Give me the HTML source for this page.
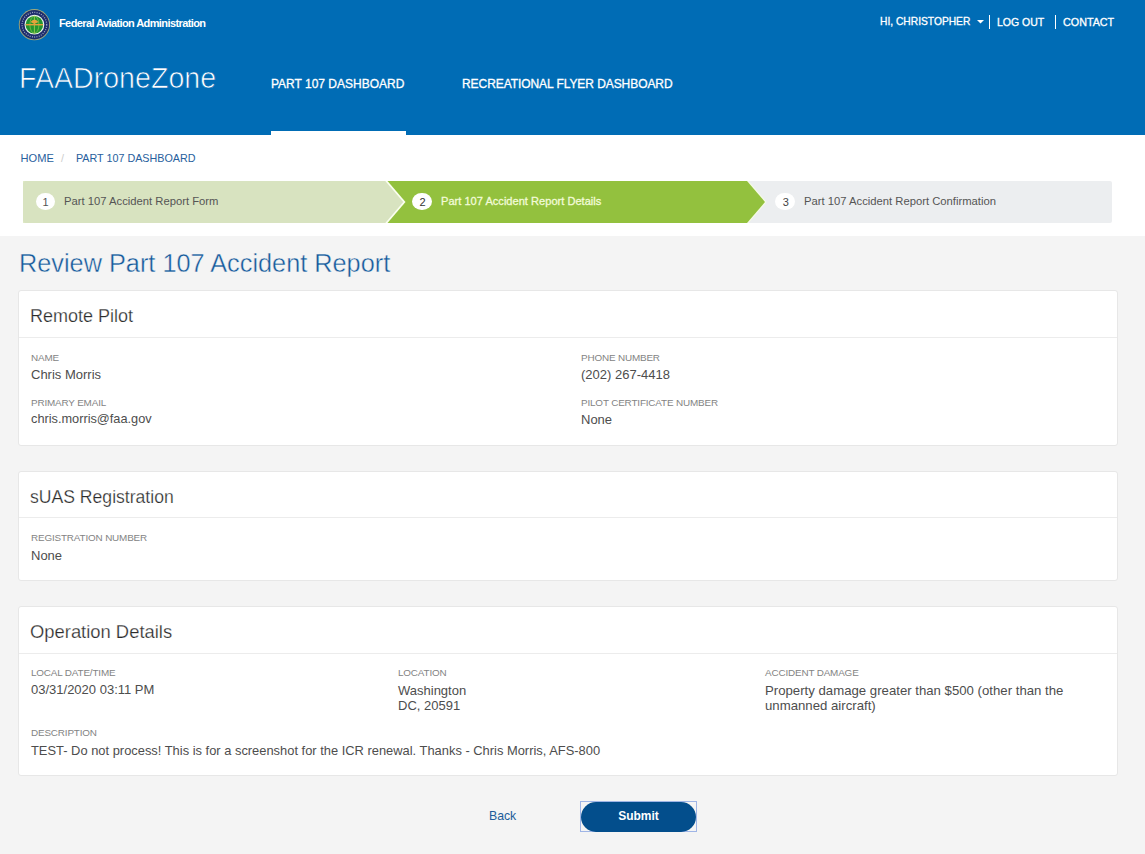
<!DOCTYPE html>
<html><head><meta charset="utf-8">
<style>
*{box-sizing:border-box;margin:0;padding:0}
html,body{width:1145px;height:854px;overflow:hidden}
body{position:relative;background:#f4f4f4;font-family:"Liberation Sans",sans-serif;color:#444}
.a{position:absolute;white-space:nowrap;line-height:1}
#hdr{position:absolute;left:0;top:0;width:1145px;height:135px;background:#006cb5}
#white{position:absolute;left:0;top:135px;width:1145px;height:101px;background:#fff}
#uline{position:absolute;left:271px;top:131px;width:135px;height:4px;background:#fff}
.hw{color:#fff}
.nv{-webkit-text-stroke:0.3px #fff}
.card{position:absolute;left:18px;width:1100px;background:#fff;border:1px solid #e7e7e7;border-radius:3px}
.card .div{position:absolute;left:0;right:0;height:1px;background:#ececec}
.ch{font-size:18px;color:#2b2b2b;-webkit-text-stroke:0.25px #fff}
.lb{font-size:9.9px;color:#838383;letter-spacing:-0.15px}
.vl{font-size:13px;color:#4d4d4d}
</style></head><body>
<div id="hdr"></div>
<div id="white"></div>
<div id="uline"></div>

<!-- logo -->
<svg class="a" style="left:18px;top:9px" width="33" height="32" viewBox="0 0 33 32">
  <circle cx="16.4" cy="15.7" r="15.6" fill="#9fa97c"/>
  <circle cx="16.4" cy="15.7" r="14.7" fill="#1e2d6b"/>
  <circle cx="16.4" cy="15.7" r="12.3" fill="none" stroke="#c3cbe3" stroke-width="1.3" stroke-dasharray="1 1.3" opacity="0.75"/>
  <circle cx="16.4" cy="15.7" r="9.9" fill="#eef5ee"/>
  <circle cx="16.4" cy="15.7" r="8.8" fill="#23952f"/>
  <ellipse cx="16.4" cy="15.7" rx="4.5" ry="8.6" fill="none" stroke="#8fc54a" stroke-width="0.7"/>
  <path d="M16.4 7 V24.5" stroke="#a9d35a" stroke-width="0.8"/>
  <path d="M7.8 15.7 H25" stroke="#e3a03a" stroke-width="1.4"/>
  <path d="M12.5 13 Q16.4 8 20.5 13 L16.4 15 Z" fill="#e6a23a"/>
</svg>
<div class="a hw" style="left:59px;top:17.5px;font-size:11px;font-weight:bold;letter-spacing:-0.6px">Federal Aviation Administration</div>

<div class="a hw" style="left:19px;top:63.6px;font-size:28.6px;-webkit-text-stroke:0.7px #006cb5">FAADroneZone</div>
<div class="a hw nv" style="left:271px;top:77.8px;font-size:12px">PART 107 DASHBOARD</div>
<div class="a hw nv" style="left:462px;top:77.8px;font-size:12px;letter-spacing:-0.07px">RECREATIONAL FLYER DASHBOARD</div>

<div class="a hw nv" style="left:880px;top:17px;font-size:10.25px">HI, CHRISTOPHER</div>
<svg class="a" style="left:977px;top:20px" width="7" height="4" viewBox="0 0 7 4"><path d="M0 0 H7 L3.5 3.5 Z" fill="#fff"/></svg>
<div class="a" style="left:989px;top:15px;width:1px;height:14px;background:#fff"></div>
<div class="a hw nv" style="left:997px;top:16.6px;font-size:10.5px">LOG OUT</div>
<div class="a" style="left:1055px;top:15px;width:1px;height:14px;background:#fff"></div>
<div class="a hw nv" style="left:1063px;top:16.6px;font-size:10.75px">CONTACT</div>

<!-- breadcrumb -->
<div class="a" style="left:20.5px;top:152.5px;font-size:11.1px;color:#27609d">HOME</div>
<div class="a" style="left:61px;top:152.5px;font-size:10.75px;color:#ccc">/</div>
<div class="a" style="left:76px;top:152.5px;font-size:10.75px;color:#27609d">PART 107 DASHBOARD</div>

<!-- stepper -->
<svg class="a" style="left:23px;top:181px" width="1089" height="42" viewBox="0 0 1089 42">
  <rect x="0" y="0" width="1089" height="42" rx="2" fill="#eceef0"/>
  <path d="M0 2 Q0 0 2 0 H725.5 L743.5 21 L725.5 42 H2 Q0 42 0 40 Z" fill="#f6fbe6"/>
  <path d="M0 2 Q0 0 2 0 H724 L742 21 L724 42 H2 Q0 42 0 40 Z" fill="#93c13e"/>
  <path d="M0 2 Q0 0 2 0 H364.5 L382.5 21 L364.5 42 H2 Q0 42 0 40 Z" fill="#fbfff0"/>
  <path d="M0 2 Q0 0 2 0 H362.3 L380.3 21 L362.3 42 H2 Q0 42 0 40 Z" fill="#d8e3c0"/>
</svg>
<div class="a" style="left:36px;top:192.6px;width:19px;height:17.5px;border-radius:50%;background:#fff"></div>
<div class="a" style="left:36px;top:196.8px;width:19px;text-align:center;font-size:11px;color:#555">1</div>
<div class="a" style="left:64px;top:195.8px;font-size:11.25px;color:#555">Part 107 Accident Report Form</div>
<div class="a" style="left:412px;top:192.6px;width:20px;height:17.5px;border-radius:50%;background:#fff"></div>
<div class="a" style="left:412.5px;top:196.8px;width:20px;text-align:center;font-size:11px;color:#333">2</div>
<div class="a" style="left:441px;top:195.8px;font-size:11.1px;color:#f2fbd8;-webkit-text-stroke:0.3px #f2fbd8">Part 107 Accident Report Details</div>
<div class="a" style="left:775px;top:192.5px;width:19.5px;height:17.5px;border-radius:50%;background:#fff"></div>
<div class="a" style="left:776px;top:196.8px;width:19.5px;text-align:center;font-size:11px;color:#444">3</div>
<div class="a" style="left:804px;top:195.8px;font-size:11.25px;color:#555">Part 107 Accident Report Confirmation</div>

<!-- title -->
<div class="a" style="left:19px;top:250.5px;font-size:25.3px;color:#155a9c;letter-spacing:0px;-webkit-text-stroke:0.4px #f4f4f4">Review Part 107 Accident Report</div>

<!-- card 1 -->
<div class="card" style="top:290px;height:156px">
  <div class="div" style="top:46px"></div>
</div>
<div class="a ch" style="left:30px;top:306.5px">Remote Pilot</div>
<div class="a lb" style="left:31px;top:352.5px">NAME</div>
<div class="a vl" style="left:31px;top:368px">Chris Morris</div>
<div class="a lb" style="left:31px;top:397.5px">PRIMARY EMAIL</div>
<div class="a vl" style="left:31px;top:413.2px;font-size:12.75px">chris.morris@faa.gov</div>
<div class="a lb" style="left:581px;top:352.5px">PHONE NUMBER</div>
<div class="a vl" style="left:581px;top:368px">(202) 267-4418</div>
<div class="a lb" style="left:581px;top:397.5px">PILOT CERTIFICATE NUMBER</div>
<div class="a vl" style="left:581px;top:413px">None</div>

<!-- card 2 -->
<div class="card" style="top:471px;height:110px">
  <div class="div" style="top:45px"></div>
</div>
<div class="a ch" style="left:30px;top:488.5px;font-size:17.6px">sUAS Registration</div>
<div class="a lb" style="left:31px;top:532.5px">REGISTRATION NUMBER</div>
<div class="a vl" style="left:31px;top:549px">None</div>

<!-- card 3 -->
<div class="card" style="top:606px;height:170px">
  <div class="div" style="top:46px"></div>
</div>
<div class="a ch" style="left:30px;top:623.3px;font-size:18.4px">Operation Details</div>
<div class="a lb" style="left:31px;top:667.5px">LOCAL DATE/TIME</div>
<div class="a vl" style="left:31px;top:683.4px">03/31/2020 03:11 PM</div>
<div class="a lb" style="left:398px;top:667.5px">LOCATION</div>
<div class="a vl" style="left:398px;top:683.2px;line-height:15px">Washington<br>DC, 20591</div>
<div class="a lb" style="left:765px;top:667.5px">ACCIDENT DAMAGE</div>
<div class="a vl" style="left:765px;top:683.2px;line-height:15px;font-size:13.2px">Property damage greater than $500 (other than the<br>unmanned aircraft)</div>
<div class="a lb" style="left:31px;top:727.6px">DESCRIPTION</div>
<div class="a vl" style="left:31px;top:744.8px;font-size:12.9px">TEST- Do not process! This is for a screenshot for the ICR renewal. Thanks - Chris Morris, AFS-800</div>

<!-- buttons -->
<div class="a" style="left:489px;top:810px;font-size:12.25px;color:#215d99">Back</div>
<div class="a" style="left:580px;top:801px;width:117px;height:31px;border:1px solid #9fb5e6"></div>
<div class="a" style="left:581px;top:802px;width:115px;height:30px;border-radius:15px;background:#034e8c"></div>
<div class="a hw" style="left:581px;top:810px;width:115px;text-align:center;font-size:12px;font-weight:bold">Submit</div>
</body></html>
